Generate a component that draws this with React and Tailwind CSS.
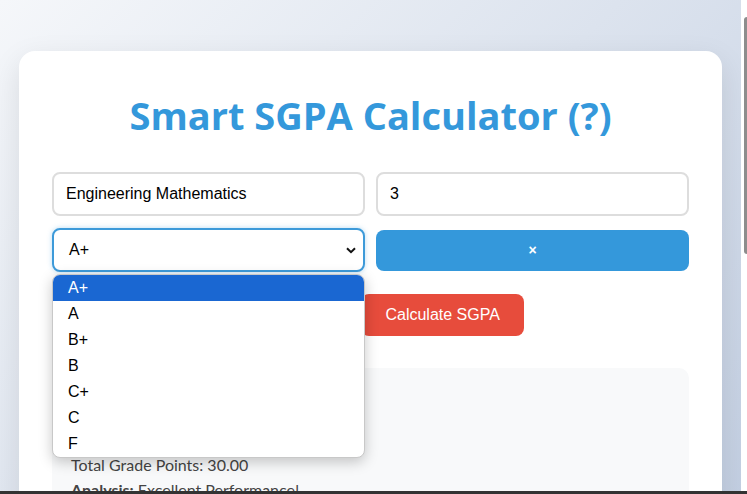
import { useState } from "react";

const grades = ["A+", "A", "B+", "B", "C+", "C", "F"];

export default function App() {
    const [subject, setSubject] = useState("Engineering Mathematics");
    const [credits, setCredits] = useState("3");
    const [grade] = useState("A+");

    return (
        <div className="flex h-screen w-screen overflow-hidden bg-[linear-gradient(135deg,#f5f7fa_0%,#c3cfe2_100%)] font-['Segoe_UI',Lato,sans-serif]">
            {/* Page */}
            <div className="flex-1 pt-[51px] px-[19px]">
                <div className="rounded-2xl bg-white px-[33px] pt-[36px] pb-8 shadow-[0_10px_30px_rgba(0,0,0,0.1)]">
                    <h1 className="text-center font-['Open_Sans',sans-serif] text-[38px] font-bold leading-[56px] text-[#3498db]">
                        Smart SGPA Calculator (?)
                    </h1>

                    {/* Subject rows */}
                    <div className="mt-[29px] grid grid-cols-2 gap-x-[11px] gap-y-3 font-['Liberation_Sans',Arial,sans-serif]">
                        <input
                            value={subject}
                            onChange={(e) => setSubject(e.target.value)}
                            className="h-[44px] rounded-lg border-2 border-[#ddd] bg-white px-3 text-base text-black outline-none"
                        />
                        <input
                            value={credits}
                            onChange={(e) => setCredits(e.target.value)}
                            className="h-[44px] rounded-lg border-2 border-[#ddd] bg-white px-3 text-base text-black outline-none"
                        />

                        <div className="relative">
                            <div className="flex h-[44px] items-center justify-between rounded-lg border-2 border-[#3d9ad9] bg-white pl-[15px] pr-[7px] text-base text-black shadow-[0_0_5px_rgba(52,152,219,0.35)]">
                                <span>{grade}</span>
                                <svg width="10" height="7" viewBox="0 0 10 7" fill="none">
                                    <path d="M1 1.2 5 5.2 9 1.2" stroke="#111" strokeWidth="2" />
                                </svg>
                            </div>

                            {/* open option list */}
                            <div className="absolute left-0 right-0 top-[46px] z-20 overflow-hidden rounded-lg border border-[#c8c8c8] bg-white shadow-[0_4px_14px_rgba(0,0,0,0.22)]">
                                {grades.map((g, i) => (
                                    <div
                                        key={g}
                                        className={
                                            i === 0
                                                ? "h-[26px] bg-[#1a67d2] pl-[15px] text-base leading-[26px] text-white"
                                                : "h-[26px] pl-[15px] text-base leading-[26px] text-black"
                                        }
                                    >
                                        {g}
                                    </div>
                                ))}
                            </div>
                        </div>
                        <div className="flex items-center">
                            <button className="h-[41px] w-full rounded-lg bg-[#3498db] text-sm font-bold text-white">
                                ×
                            </button>
                        </div>
                    </div>

                    {/* Actions */}
                    <div className="mt-[22px] flex justify-center gap-[10px] font-['Liberation_Sans',Arial,sans-serif]">
                        <button className="h-[42px] rounded-lg bg-[#3498db] px-6 text-base text-white">
                            Add Subject
                        </button>
                        <button className="h-[42px] rounded-lg bg-[#e74c3c] px-6 text-base text-white">
                            Calculate SGPA
                        </button>
                    </div>

                    {/* Result */}
                    <div className="mt-8 rounded-[10px] bg-[#f8f9fa] px-[19px] pt-[6px] pb-4 text-base leading-[25px] text-[#444]">
                        <h3 className="text-xl font-bold text-[#2c3e50]">Result</h3>
                        <p>SGPA: 10.00</p>
                        <p>Total Credits: 3</p>
                        <p>Total Grade Points: 30.00</p>
                        <p>
                            <strong>Analysis:</strong> Excellent Performance!
                        </p>
                    </div>
                </div>
            </div>

            {/* scrollbar */}
            <div className="flex w-[6px] flex-col bg-white pt-[17px]">
                <div className="ml-[3px] h-[237px] rounded-l-sm bg-[#8d8d8d]"></div>
            </div>
            <div className="fixed bottom-0 left-0 h-[3px] w-full bg-[#333]"></div>
        </div>
    );
}
